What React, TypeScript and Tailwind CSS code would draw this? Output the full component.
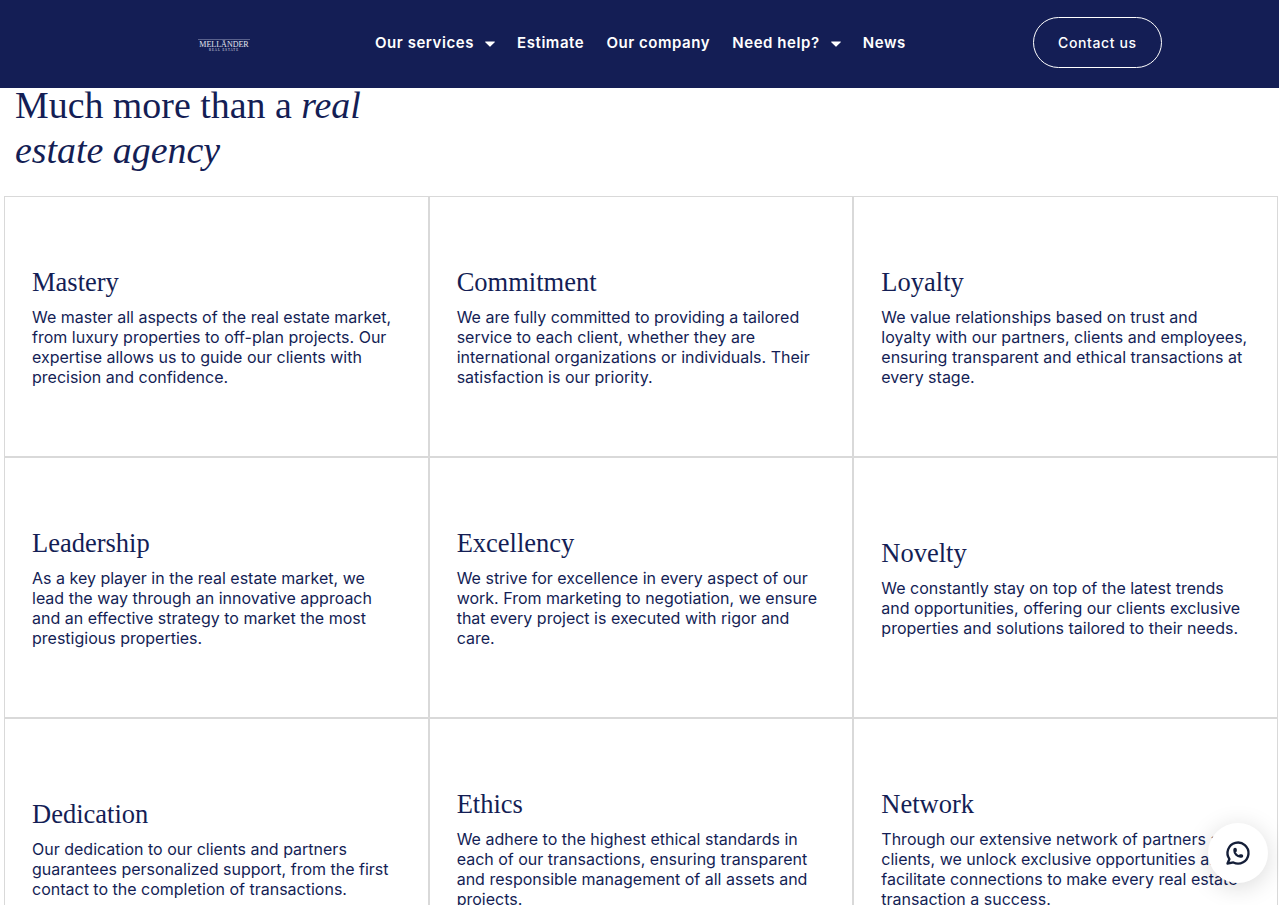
import React from "react";
import { TbBrandWhatsapp } from "react-icons/tb";

const cards = [
  {
    title: "Mastery",
    text: "We master all aspects of the real estate market, from luxury properties to off-plan projects. Our expertise allows us to guide our clients with precision and confidence.",
  },
  {
    title: "Commitment",
    text: "We are fully committed to providing a tailored service to each client, whether they are international organizations or individuals. Their satisfaction is our priority.",
  },
  {
    title: "Loyalty",
    text: "We value relationships based on trust and loyalty with our partners, clients and employees, ensuring transparent and ethical transactions at every stage.",
  },
  {
    title: "Leadership",
    text: "As a key player in the real estate market, we lead the way through an innovative approach and an effective strategy to market the most prestigious properties.",
  },
  {
    title: "Excellency",
    text: "We strive for excellence in every aspect of our work. From marketing to negotiation, we ensure that every project is executed with rigor and care.",
  },
  {
    title: "Novelty",
    text: "We constantly stay on top of the latest trends and opportunities, offering our clients exclusive properties and solutions tailored to their needs.",
  },
  {
    title: "Dedication",
    text: "Our dedication to our clients and partners guarantees personalized support, from the first contact to the completion of transactions.",
  },
  {
    title: "Ethics",
    text: "We adhere to the highest ethical standards in each of our transactions, ensuring transparent and responsible management of all assets and projects.",
  },
  {
    title: "Network",
    text: "Through our extensive network of partners and clients, we unlock exclusive opportunities and facilitate connections to make every real estate transaction a success.",
  },
];

const Caret: React.FC = () => (
  <svg width="10" height="6" viewBox="0 0 10 6" className="ml-[11px] mt-[1px]">
    <path d="M0.6 0.4h8.8a.5.5 0 0 1 .35.85L5.35 5.6a.5.5 0 0 1-.7 0L.25 1.25A.5.5 0 0 1 .6.4z" fill="#fff" />
  </svg>
);

const App: React.FC = () => {
  return (
    <div className="relative h-[905px] overflow-hidden bg-white font-['Inter',sans-serif] text-[#141e55]">
      <header className="h-[88px] bg-[#141e55] flex items-center pb-[3px] text-white">
        <div className="w-[375px] pl-[198px] pt-[6px] shrink-0">
          <div className="w-[52px] flex flex-col items-center font-['Liberation_Serif',serif] leading-none text-[#e4e6f0]">
            <div className="w-full border-t border-[#59618c]" />
            <span className="text-[8px] leading-[9px] whitespace-nowrap">MELLÄNDER</span>
            <span className="text-[3px] leading-[3px] tracking-[1px] whitespace-nowrap">REAL ESTATE</span>
          </div>
        </div>
        <nav className="flex items-center gap-[22.2px] pt-[2px] text-[15px] font-semibold tracking-[0.55px]">
          <a className="flex items-center">
            Our services
            <Caret />
          </a>
          <a>Estimate</a>
          <a>Our company</a>
          <a className="flex items-center">
            Need help?
            <Caret />
          </a>
          <a>News</a>
        </nav>
        <a className="ml-[127px] w-[129px] h-[51px] rounded-full border border-white flex items-center justify-center text-[14px] font-medium tracking-[0.6px]">
          Contact us
        </a>
      </header>

      <h1 className="-mt-[5px] pl-[15px] w-[400px] h-[113px] font-['Liberation_Serif',serif] text-[37.9px] leading-[45px] font-normal">
        Much more than a <em>real estate agency</em>
      </h1>

      <div className="grid grid-cols-3 ml-[4px] mr-[1px]">
        {cards.map((card) => (
          <div
            key={card.title}
            className="h-[261px] border border-[#d9d9d9] pl-[27px] pr-[28px] pb-[2px] flex flex-col justify-center"
          >
            <h3 className="font-['Liberation_Serif',serif] text-[26.5px] leading-[34px] font-normal mb-[8px]">
              {card.title}
            </h3>
            <p className="text-[16px] leading-[20px]">{card.text}</p>
          </div>
        ))}
      </div>

      <div className="absolute left-[1208px] top-[823px] w-[60px] h-[60px] rounded-full bg-white shadow-[0_4px_24px_rgba(0,0,0,0.15)] flex items-center justify-center">
        <TbBrandWhatsapp className="text-[#141e38] w-[28px] h-[28px]" />
      </div>
    </div>
  );
};

export default App;
